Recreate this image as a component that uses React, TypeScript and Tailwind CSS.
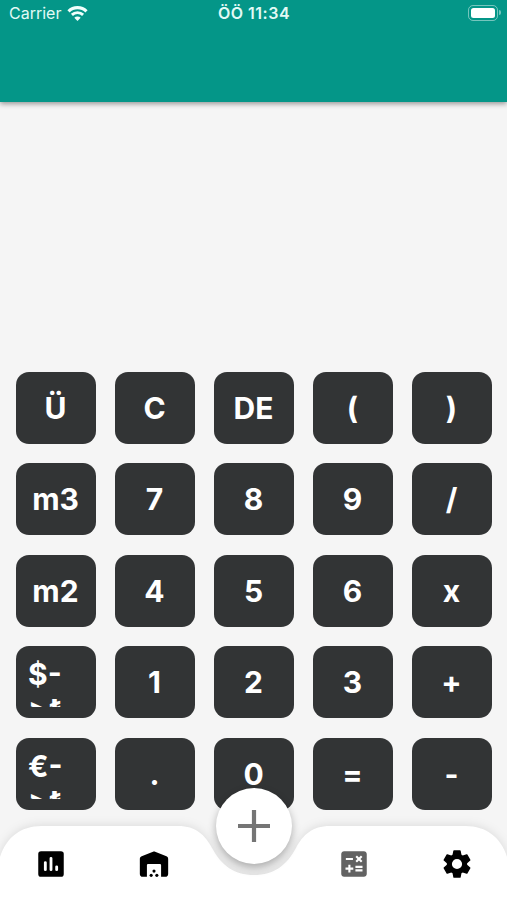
import { MdCalculate } from "react-icons/md";

interface KeyProps {
  label: string;
}

const rows: string[][] = [
  ["Ü", "C", "DE", "(", ")"],
  ["m3", "7", "8", "9", "/"],
  ["m2", "4", "5", "6", "x"],
  ["$->₺", "1", "2", "3", "+"],
  ["€->₺", ".", "0", "=", "-"],
];

const gearTeeth = [0, 60, 120, 180, 240, 300];

function CalcKey({ label }: KeyProps) {
  const isCurrency = label.includes("->");

  if (isCurrency) {
    return (
      <button className="h-[72px] rounded-[13px] bg-[#323435] px-3 pt-[10px] pb-[11px]">
        <span className="block h-[51px] overflow-hidden text-left leading-9">
          {label.slice(0, 2)}
          <br />
          {label.slice(2)}
        </span>
      </button>
    );
  }

  return (
    <button className="flex h-[72px] items-center justify-center rounded-[13px] bg-[#323435] pr-px pt-px">
      {label}
    </button>
  );
}

function StatusBar() {
  return (
    <div className="grid h-[26px] grid-cols-3 items-center pr-[6px] pl-[9px] text-[16px] text-[#e2faf6]">
      <div className="flex items-center gap-[6px]">
        <span>Carrier</span>
        <svg width="21" height="15" viewBox="0 0 20 15" fill="none">
          <path d="M1 5.3a12.8 12.8 0 0 1 18 0" stroke="#effffc" strokeWidth="3.1" />
          <path d="M4.4 8.9a8 8 0 0 1 11.2 0" stroke="#effffc" strokeWidth="2.9" />
          <path d="M10 15l-3.2-3.3a4.6 4.6 0 0 1 6.4 0z" fill="#effffc" />
        </svg>
      </div>
      <span className="-ml-[2px] text-center font-semibold tracking-[0.5px] whitespace-nowrap">
        ÖÖ 11:34
      </span>
      <div className="-mt-px flex items-center justify-end gap-px">
        <div className="h-[16px] w-[30px] rounded-[5px] border border-white/45 p-[2px]">
          <div className="h-full rounded-[2.5px] bg-white" />
        </div>
        <div className="h-[5px] w-[2px] rounded-r-full bg-white/45" />
      </div>
    </div>
  );
}

function ChartIcon() {
  return (
    <svg width="34" height="34" viewBox="0 0 24 24">
      <rect x="3" y="3" width="18" height="18" rx="2" fill="black" />
      <path d="M8 11v5M12 8v8M16 14v2" stroke="white" strokeWidth="2" strokeLinecap="round" />
    </svg>
  );
}

function WarehouseIcon() {
  return (
    <svg width="34" height="34" viewBox="0 0 24 24">
      <path
        d="M2 19V8.4c0-.9.5-1.5 1.3-1.9l8-3.2c.5-.2 1-.2 1.5 0l8 3.2c.8.4 1.2 1 1.2 1.9V19c0 1.2-.8 2-2 2h-3v-8.2a.8.8 0 0 0-.8-.8H7.8a.8.8 0 0 0-.8.8V21H4c-1.2 0-2-.8-2-2z"
        fill="black"
      />
      <circle cx="12" cy="17" r="1.1" fill="black" />
      <circle cx="10" cy="20" r="1.1" fill="black" />
      <circle cx="14" cy="20" r="1.1" fill="black" />
    </svg>
  );
}

function GearIcon() {
  return (
    <svg width="34" height="34" viewBox="0 0 24 24">
      <circle cx="12" cy="12" r="5.4" fill="none" stroke="black" strokeWidth="3.6" />
      {gearTeeth.map((angle) => (
        <path
          key={angle}
          d="M9.2 6.2L9.9 2.8h4.2l.7 3.4z"
          transform={`rotate(${angle} 12 12)`}
          fill="black"
          stroke="black"
          strokeWidth="1"
          strokeLinejoin="round"
        />
      ))}
    </svg>
  );
}

function BottomNav() {
  return (
    <nav className="relative mt-[16.4px] h-[74px]">
      {/* Notched bar background */}
      <svg
        className="absolute inset-0 overflow-visible drop-shadow-[0_-1px_5px_rgba(0,0,0,0.1)]"
        width="507"
        height="74"
        viewBox="0 0 507 74"
      >
        <path
          d="M0 31C6 12 20 0 42 0H178C196 0 205 9 212 22C221 39 234 49 254 49C274 49 287 39 296 22C303 9 312 0 330 0H465C487 0 501 12 507 31V74H0Z"
          fill="white"
        />
      </svg>

      {/* Tabs */}
      <div className="relative flex justify-between pt-[21px] pr-[33px] pl-[34px]">
        <div className="flex gap-[69px]">
          <button aria-label="Reports">
            <ChartIcon />
          </button>
          <button aria-label="Warehouse">
            <WarehouseIcon />
          </button>
        </div>
        <div className="flex gap-[69px]">
          <button aria-label="Calculator">
            <MdCalculate size={34} color="#626262" />
          </button>
          <button aria-label="Settings">
            <GearIcon />
          </button>
        </div>
      </div>

      {/* Add button */}
      <button
        aria-label="Add"
        className="absolute -top-[38px] left-[216px] flex h-[76px] w-[76px] items-center justify-center rounded-full bg-white shadow-[0_4px_9px_rgba(0,0,0,0.3)]"
      >
        <svg width="32" height="32" viewBox="0 0 32 32">
          <path d="M16 0v32M0 16h32" stroke="#757575" strokeWidth="4.2" />
        </svg>
      </button>
    </nav>
  );
}

export default function App() {
  return (
    <div className="flex h-[900px] w-[507px] flex-col overflow-hidden bg-[#f5f5f5] font-['Inter','Noto_Sans',sans-serif]">
      <header className="h-[102px] bg-[#049688] shadow-[0_2px_5px_rgba(0,0,0,0.38)]">
        <StatusBar />
      </header>

      {/* Keypad */}
      <main className="mt-auto grid grid-cols-5 gap-x-[19px] gap-y-[19.4px] pr-[15px] pl-4 text-[30px] font-bold text-white">
        {rows.flat().map((label) => (
          <CalcKey key={label} label={label} />
        ))}
      </main>

      <BottomNav />
    </div>
  );
}
